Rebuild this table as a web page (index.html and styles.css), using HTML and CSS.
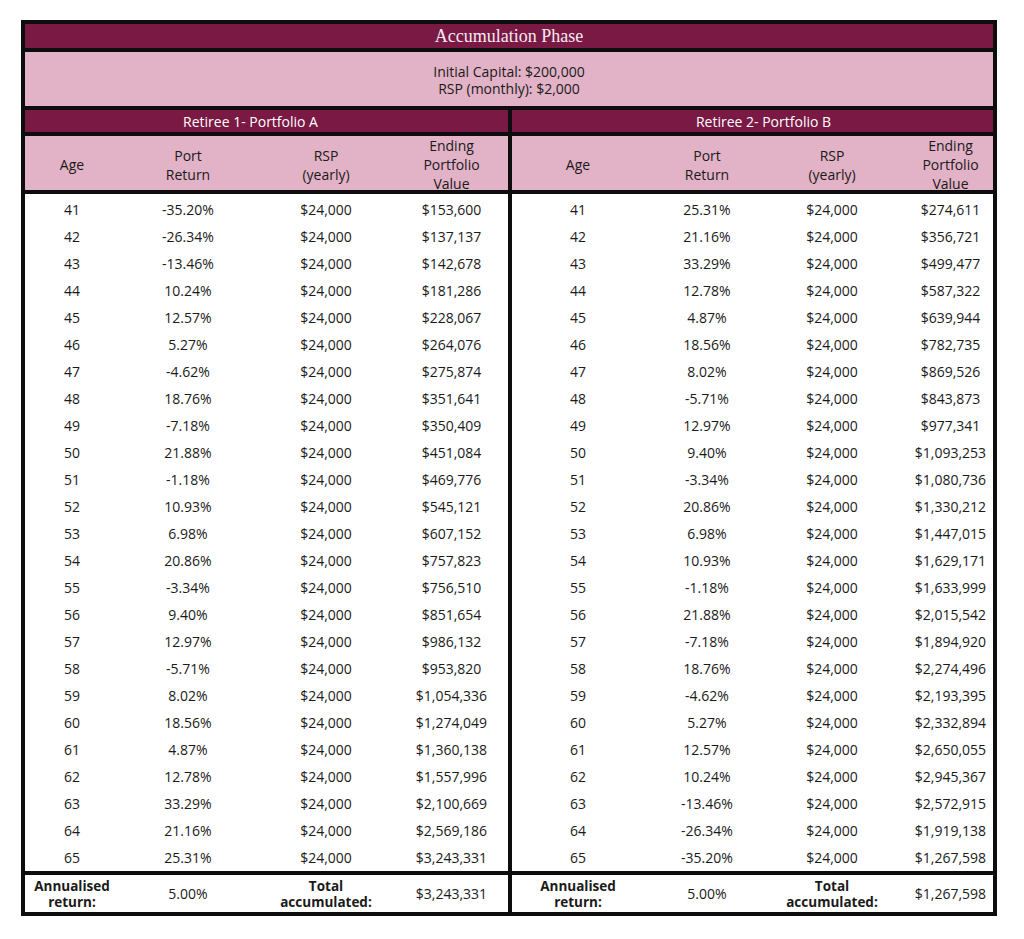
FILE: index.html
```html
<!DOCTYPE html>
<html lang="en">
<head>
<meta charset="utf-8">
<title>Accumulation Phase</title>
<link rel="stylesheet" href="styles.css">
</head>
<body>
<div class="sheet">
  <div class="title">Accumulation Phase</div>
  <div class="info">Initial Capital: $200,000<br>RSP (monthly): $2,000</div>
  <div class="panels">
    <section class="panel panel-a">
      <div class="retiree">Retiree 1- Portfolio A</div>
      <div class="row colhead"><span>Age</span><span>Port<br>Return</span><span>RSP<br>(yearly)</span><span class="c4">Ending<br>Portfolio<br>Value</span></div>
      <div class="rows">
        <div class="row"><span>41</span><span>-35.20%</span><span>$24,000</span><span class="c4">$153,600</span></div>
        <div class="row"><span>42</span><span>-26.34%</span><span>$24,000</span><span class="c4">$137,137</span></div>
        <div class="row"><span>43</span><span>-13.46%</span><span>$24,000</span><span class="c4">$142,678</span></div>
        <div class="row"><span>44</span><span>10.24%</span><span>$24,000</span><span class="c4">$181,286</span></div>
        <div class="row"><span>45</span><span>12.57%</span><span>$24,000</span><span class="c4">$228,067</span></div>
        <div class="row"><span>46</span><span>5.27%</span><span>$24,000</span><span class="c4">$264,076</span></div>
        <div class="row"><span>47</span><span>-4.62%</span><span>$24,000</span><span class="c4">$275,874</span></div>
        <div class="row"><span>48</span><span>18.76%</span><span>$24,000</span><span class="c4">$351,641</span></div>
        <div class="row"><span>49</span><span>-7.18%</span><span>$24,000</span><span class="c4">$350,409</span></div>
        <div class="row"><span>50</span><span>21.88%</span><span>$24,000</span><span class="c4">$451,084</span></div>
        <div class="row"><span>51</span><span>-1.18%</span><span>$24,000</span><span class="c4">$469,776</span></div>
        <div class="row"><span>52</span><span>10.93%</span><span>$24,000</span><span class="c4">$545,121</span></div>
        <div class="row"><span>53</span><span>6.98%</span><span>$24,000</span><span class="c4">$607,152</span></div>
        <div class="row"><span>54</span><span>20.86%</span><span>$24,000</span><span class="c4">$757,823</span></div>
        <div class="row"><span>55</span><span>-3.34%</span><span>$24,000</span><span class="c4">$756,510</span></div>
        <div class="row"><span>56</span><span>9.40%</span><span>$24,000</span><span class="c4">$851,654</span></div>
        <div class="row"><span>57</span><span>12.97%</span><span>$24,000</span><span class="c4">$986,132</span></div>
        <div class="row"><span>58</span><span>-5.71%</span><span>$24,000</span><span class="c4">$953,820</span></div>
        <div class="row"><span>59</span><span>8.02%</span><span>$24,000</span><span class="c4">$1,054,336</span></div>
        <div class="row"><span>60</span><span>18.56%</span><span>$24,000</span><span class="c4">$1,274,049</span></div>
        <div class="row"><span>61</span><span>4.87%</span><span>$24,000</span><span class="c4">$1,360,138</span></div>
        <div class="row"><span>62</span><span>12.78%</span><span>$24,000</span><span class="c4">$1,557,996</span></div>
        <div class="row"><span>63</span><span>33.29%</span><span>$24,000</span><span class="c4">$2,100,669</span></div>
        <div class="row"><span>64</span><span>21.16%</span><span>$24,000</span><span class="c4">$2,569,186</span></div>
        <div class="row"><span>65</span><span>25.31%</span><span>$24,000</span><span class="c4">$3,243,331</span></div>
      </div>
      <div class="row foot"><b>Annualised<br>return:</b><span>5.00%</span><b>Total<br>accumulated:</b><span class="c4">$3,243,331</span></div>
    </section>
    <section class="panel panel-b">
      <div class="retiree">Retiree 2- Portfolio B</div>
      <div class="row colhead"><span>Age</span><span>Port<br>Return</span><span>RSP<br>(yearly)</span><span class="c4">Ending<br>Portfolio<br>Value</span></div>
      <div class="rows">
        <div class="row"><span>41</span><span>25.31%</span><span>$24,000</span><span class="c4">$274,611</span></div>
        <div class="row"><span>42</span><span>21.16%</span><span>$24,000</span><span class="c4">$356,721</span></div>
        <div class="row"><span>43</span><span>33.29%</span><span>$24,000</span><span class="c4">$499,477</span></div>
        <div class="row"><span>44</span><span>12.78%</span><span>$24,000</span><span class="c4">$587,322</span></div>
        <div class="row"><span>45</span><span>4.87%</span><span>$24,000</span><span class="c4">$639,944</span></div>
        <div class="row"><span>46</span><span>18.56%</span><span>$24,000</span><span class="c4">$782,735</span></div>
        <div class="row"><span>47</span><span>8.02%</span><span>$24,000</span><span class="c4">$869,526</span></div>
        <div class="row"><span>48</span><span>-5.71%</span><span>$24,000</span><span class="c4">$843,873</span></div>
        <div class="row"><span>49</span><span>12.97%</span><span>$24,000</span><span class="c4">$977,341</span></div>
        <div class="row"><span>50</span><span>9.40%</span><span>$24,000</span><span class="c4">$1,093,253</span></div>
        <div class="row"><span>51</span><span>-3.34%</span><span>$24,000</span><span class="c4">$1,080,736</span></div>
        <div class="row"><span>52</span><span>20.86%</span><span>$24,000</span><span class="c4">$1,330,212</span></div>
        <div class="row"><span>53</span><span>6.98%</span><span>$24,000</span><span class="c4">$1,447,015</span></div>
        <div class="row"><span>54</span><span>10.93%</span><span>$24,000</span><span class="c4">$1,629,171</span></div>
        <div class="row"><span>55</span><span>-1.18%</span><span>$24,000</span><span class="c4">$1,633,999</span></div>
        <div class="row"><span>56</span><span>21.88%</span><span>$24,000</span><span class="c4">$2,015,542</span></div>
        <div class="row"><span>57</span><span>-7.18%</span><span>$24,000</span><span class="c4">$1,894,920</span></div>
        <div class="row"><span>58</span><span>18.76%</span><span>$24,000</span><span class="c4">$2,274,496</span></div>
        <div class="row"><span>59</span><span>-4.62%</span><span>$24,000</span><span class="c4">$2,193,395</span></div>
        <div class="row"><span>60</span><span>5.27%</span><span>$24,000</span><span class="c4">$2,332,894</span></div>
        <div class="row"><span>61</span><span>12.57%</span><span>$24,000</span><span class="c4">$2,650,055</span></div>
        <div class="row"><span>62</span><span>10.24%</span><span>$24,000</span><span class="c4">$2,945,367</span></div>
        <div class="row"><span>63</span><span>-13.46%</span><span>$24,000</span><span class="c4">$2,572,915</span></div>
        <div class="row"><span>64</span><span>-26.34%</span><span>$24,000</span><span class="c4">$1,919,138</span></div>
        <div class="row"><span>65</span><span>-35.20%</span><span>$24,000</span><span class="c4">$1,267,598</span></div>
      </div>
      <div class="row foot"><b>Annualised<br>return:</b><span>5.00%</span><b>Total<br>accumulated:</b><span class="c4">$1,267,598</span></div>
    </section>
  </div>
</div>
</body>
</html>
```
FILE: styles.css
```css
* { box-sizing: border-box; }

html, body {
  margin: 0;
  padding: 0;
  background: #ffffff;
}

body {
  font-family: "Open Sans", Lato, sans-serif;
  font-size: 14px;
  color: #1a1a1a;
}

.sheet {
  width: 976px;
  margin: 20px 0 0 21px;
  border: 4px solid #0d0d0d;
  background: #0d0d0d;
  display: flex;
  flex-direction: column;
  gap: 4px;
}

.title {
  height: 24px;
  background: #7a1944;
  color: #f5eaf0;
  font-family: "Liberation Serif", "DejaVu Serif", serif;
  font-size: 18px;
  display: flex;
  align-items: center;
  justify-content: center;
}

.info {
  height: 54px;
  background: #e2b2c6;
  text-align: center;
  line-height: 17px;
  display: flex;
  align-items: center;
  justify-content: center;
  padding-top: 2px;
}

.panels {
  display: grid;
  grid-template-columns: 483px 481px;
  gap: 4px;
}

.panel {
  display: flex;
  flex-direction: column;
  gap: 4px;
}

.panel-a { --cols: 94px 138px 138px 113px; }
.panel-b { --cols: 132px 126px 124px 99px; }

.retiree {
  height: 22px;
  background: #7a1944;
  color: #ffffff;
  display: flex;
  align-items: center;
  justify-content: center;
}

.panel-a .retiree { padding-right: 32px; }
.panel-b .retiree { padding-left: 22px; }

.row {
  display: grid;
  grid-template-columns: var(--cols);
  align-items: center;
  text-align: center;
}

.panel-b .c4 { padding-left: 14px; }

.colhead {
  height: 54px;
  background: #e2b2c6;
  line-height: 19px;
}

.rows {
  height: 677px;
  background: #ffffff;
  padding-top: 2px;
}

.rows .row {
  height: 27px;
}

.foot {
  height: 37px;
  background: #ffffff;
  line-height: 16px;
}

.foot b {
  font-weight: 700;
  font-size: 13.5px;
}
```
